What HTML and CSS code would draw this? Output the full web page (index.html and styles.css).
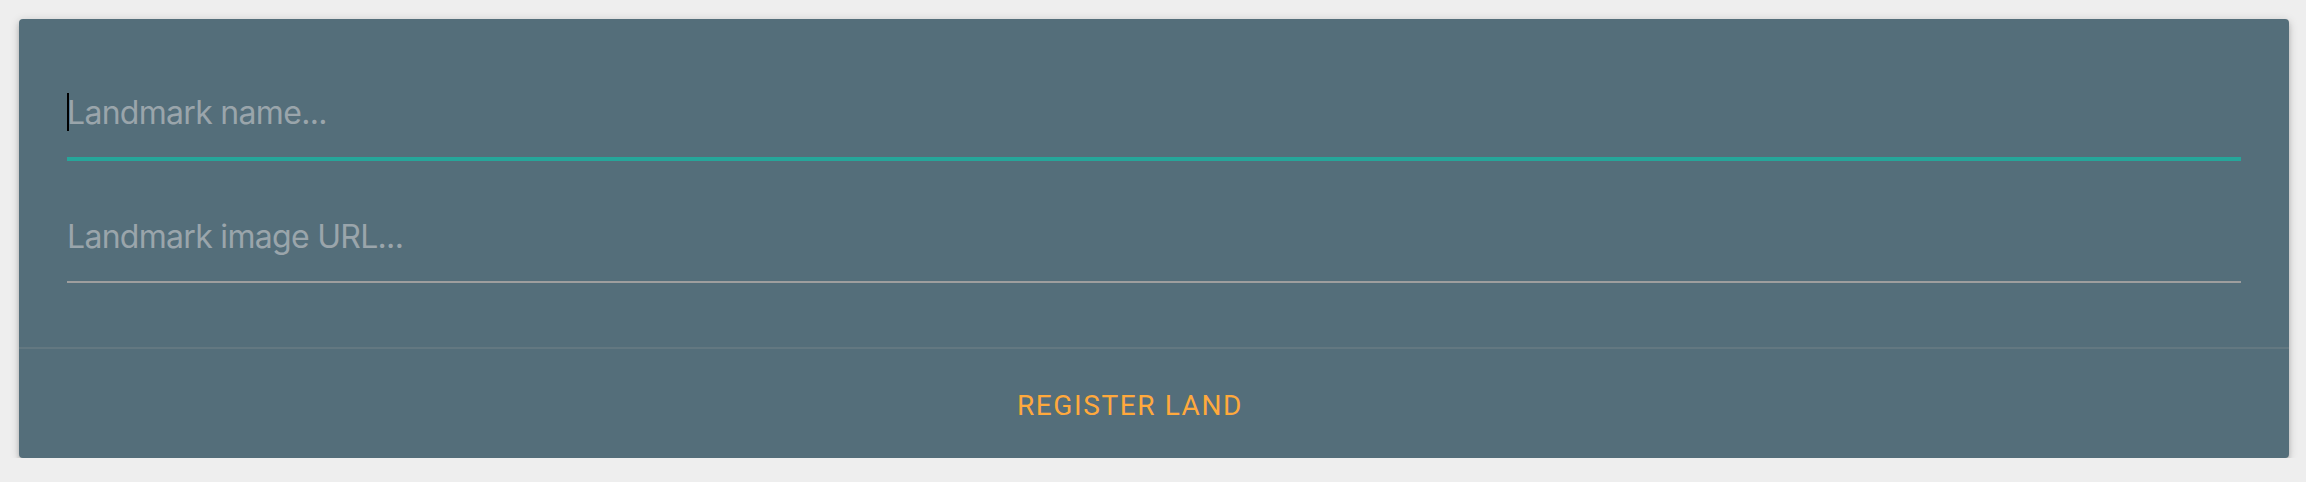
FILE: index.html
```html
<!DOCTYPE html>
<html lang="en">
<head>
<meta charset="utf-8">
<title>Register land</title>
<link rel="stylesheet" href="styles.css">
</head>
<body>
  <div class="card">
    <div class="card-content">
      <div class="field">
        <input class="text-input focused" type="text" placeholder="Landmark name...">
        <span class="caret"></span>
      </div>
      <div class="field">
        <input class="text-input" type="text" placeholder="Landmark image URL...">
      </div>
    </div>
    <div class="card-action">
      <a class="action-link">REGISTER LAND</a>
    </div>
  </div>
</body>
</html>
```

FILE: styles.css
```css
html, body {
  margin: 0;
  padding: 0;
  background: #eeeeee;
}

body {
  padding: 19px 17px 0 19px;
}

.card {
  background: #546e7a;
  border-radius: 4px;
  box-shadow: 0 4px 4px 0 rgba(0,0,0,0.14), 0 6px 2px -4px rgba(0,0,0,0.12), 0 2px 10px 0 rgba(0,0,0,0.2);
  overflow: hidden;
}

.card-content {
  padding: 48px 48px 64px 48px;
  display: flex;
  flex-direction: column;
  gap: 32px;
}

.field {
  position: relative;
}

.text-input {
  display: block;
  box-sizing: content-box;
  width: 100%;
  height: 90px;
  padding: 0;
  margin: 0;
  border: none;
  border-bottom: 2px solid #9e9e9e;
  background: transparent;
  outline: none;
  font-family: Inter, "Noto Sans", sans-serif;
  font-size: 32px;
  letter-spacing: -0.7px;
  color: #ffffff;
}

.text-input.focused {
  border-bottom-color: #26a69a;
  box-shadow: 0 2px 0 0 #26a69a;
}

.text-input::placeholder {
  color: #9aa5ab;
  opacity: 1;
}

.caret {
  position: absolute;
  left: 0;
  top: 26px;
  width: 2px;
  height: 38px;
  background: #000000;
}

.card-action {
  border-top: 2px solid rgba(160,160,160,0.2);
  padding: 34px 48px 30px 48px;
  display: flex;
  justify-content: center;
  line-height: 45px;
}

.action-link {
  font-family: Roboto, "Liberation Sans", sans-serif;
  font-size: 28px;
  letter-spacing: 1.6px;
  color: #ffa93c;
  margin-right: 48px;
}
```
